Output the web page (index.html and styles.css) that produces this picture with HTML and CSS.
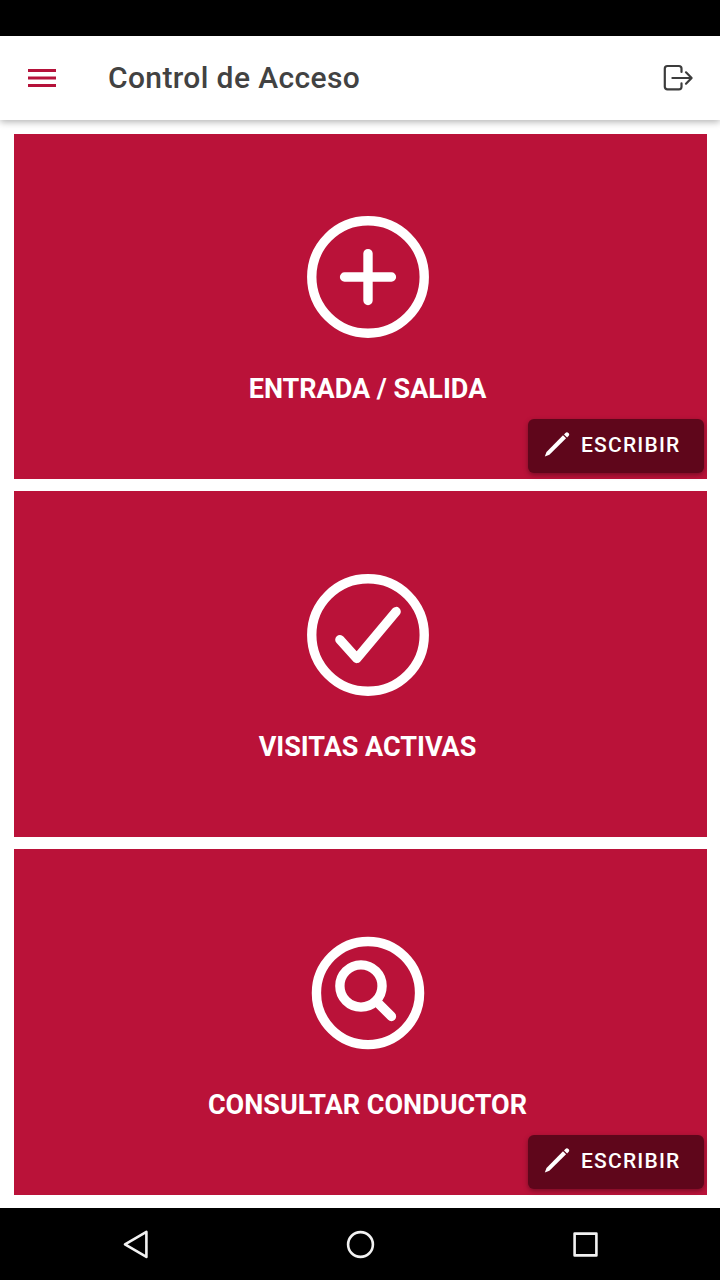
FILE: index.html
```html
<!DOCTYPE html>
<html lang="es">
<head>
  <meta charset="UTF-8">
  <meta name="viewport" content="width=device-width, initial-scale=1.0">
  <title>Control de Acceso</title>
  <link rel="stylesheet" href="styles.css">
</head>
<body>
  <div class="status-bar"></div>

  <header class="toolbar">
    <button class="menu-button" aria-label="Menú">
      <svg viewBox="0 0 28 20"><path d="M0 2.5h28M0 10h28M0 17.5h28"/></svg>
    </button>
    <h1>Control de Acceso</h1>
    <button class="logout-button" aria-label="Salir">
      <svg viewBox="0 0 32 28">
        <path d="M19.5 8V4.6a2.6 2.6 0 0 0-2.6-2.6H5.4a2.6 2.6 0 0 0-2.6 2.6v18.2a2.6 2.6 0 0 0 2.6 2.6h11.5a2.6 2.6 0 0 0 2.6-2.6v-3.4"/>
        <path d="M10.4 14h19M24 8.3l5.6 5.7-5.6 5.7"/>
      </svg>
    </button>
  </header>

  <main class="cards">
    <section class="card">
      <svg class="card-icon" viewBox="0 0 512 512">
        <circle cx="256" cy="256" r="192"/>
        <path d="M256 176v160M336 256H176"/>
      </svg>
      <h2>ENTRADA / SALIDA</h2>
      <button class="write-button">
        <svg viewBox="0 0 26 26"><path d="M.8 24.4l1.7-4.5L19 3.2l3.1 3.1L5.4 22.8z"/><path d="M20 2.4l1.4-1.3a2 2 0 0 1 3.1 3l-1.4 1.4z"/></svg>
        <span>ESCRIBIR</span>
      </button>
    </section>

    <section class="card">
      <svg class="card-icon" viewBox="0 0 512 512">
        <circle cx="256" cy="256" r="192"/>
        <path d="M352 176L217.6 336 160 272"/>
      </svg>
      <h2>VISITAS ACTIVAS</h2>
    </section>

    <section class="card">
      <svg class="card-icon" viewBox="0 0 512 512">
        <circle cx="256" cy="256" r="176"/>
        <circle cx="232" cy="232" r="72"/>
        <path d="M283.64 283.64L336 336"/>
      </svg>
      <h2>CONSULTAR CONDUCTOR</h2>
      <button class="write-button">
        <svg viewBox="0 0 26 26"><path d="M.8 24.4l1.7-4.5L19 3.2l3.1 3.1L5.4 22.8z"/><path d="M20 2.4l1.4-1.3a2 2 0 0 1 3.1 3l-1.4 1.4z"/></svg>
        <span>ESCRIBIR</span>
      </button>
    </section>
  </main>

  <nav class="nav-bar">
    <svg viewBox="0 0 30 30"><path d="M26.4 2.9v25L5 15.4z"/></svg>
    <svg viewBox="0 0 30 30"><circle cx="15.5" cy="15.5" r="12.4"/></svg>
    <svg viewBox="0 0 30 30"><rect x="4.6" y="4.6" width="21.8" height="21.8"/></svg>
  </nav>
</body>
</html>
```
FILE: styles.css
```css
* {
  margin: 0;
  padding: 0;
  box-sizing: border-box;
}

body {
  display: flex;
  flex-direction: column;
  height: 1280px;
  overflow: hidden;
  font-family: Roboto, sans-serif;
  background: #ffffff;
}

button {
  border: none;
  background: none;
  font-family: inherit;
}

svg {
  display: block;
  fill: none;
}

.status-bar {
  height: 36px;
  background: #000000;
}

/* Toolbar */
.toolbar {
  display: flex;
  align-items: center;
  height: 84px;
  padding: 0 26px 0 28px;
  background: #ffffff;
  box-shadow: 0 2px 7px rgba(0, 0, 0, 0.3);
}

.menu-button svg {
  width: 28px;
  height: 20px;
  stroke: #b5123a;
  stroke-width: 3;
}

.toolbar h1 {
  flex: 1;
  margin-left: 52px;
  padding-bottom: 2px;
  font-size: 30px;
  font-weight: 500;
  letter-spacing: 0.37px;
  color: #424242;
}

.logout-button svg {
  width: 32px;
  height: 28px;
  stroke: #3c3c3c;
  stroke-width: 2.2;
  stroke-linecap: round;
  stroke-linejoin: round;
}

/* Cards */
.cards {
  flex: 1;
  display: grid;
  grid-template-rows: 345px 346px 346px;
  gap: 12px;
  padding: 14px 13px 13px 14px;
}

.card {
  position: relative;
  padding: 68px 0 0 15px;
  background: #ba1239;
  color: #ffffff;
  text-align: center;
}

.card + .card {
  padding-top: 69px;
}

.card-icon {
  width: 150px;
  height: 150px;
  margin: 0 auto;
  stroke: #ffffff;
  stroke-width: 32;
  stroke-linecap: round;
  stroke-linejoin: round;
}

.card h2 {
  margin: 21px 1px 0 0;
  font-size: 27px;
  font-weight: 700;
  line-height: 32px;
}

/* Floating button over the card corner */
.write-button {
  position: absolute;
  right: 3px;
  bottom: 6px;
  display: flex;
  align-items: center;
  width: 176px;
  height: 54px;
  padding-left: 16px;
  padding-bottom: 2px;
  border-radius: 6px;
  background: #5f061b;
  box-shadow: 0 2px 5px rgba(0, 0, 0, 0.35);
  color: #ffffff;
  font-size: 21px;
  font-weight: 500;
  letter-spacing: 1.2px;
}

.write-button svg {
  width: 26px;
  height: 26px;
  margin-right: 11px;
  fill: #ffffff;
}

/* Android navigation */
.nav-bar {
  display: flex;
  align-items: center;
  justify-content: space-between;
  height: 72px;
  padding: 0 120px;
  background: #000000;
}

.nav-bar svg {
  width: 30px;
  height: 30px;
  stroke: #f2f2f2;
  stroke-width: 2.6;
  stroke-linejoin: round;
}
```
